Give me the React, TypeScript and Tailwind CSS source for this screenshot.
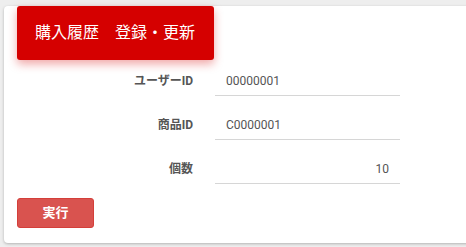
const font = "font-['Roboto','Noto_Sans_CJK_JP',sans-serif]";

const fields = [
  { label: 'ユーザーID', value: '00000001', align: 'text-left' },
  { label: '商品ID', value: 'C0000001', align: 'text-left' },
  { label: '個数', value: '10', align: 'text-right' },
];

export default function App() {
  return (
    <div className={`min-h-screen bg-[#eeeeee] pt-[32px] pl-[4px] overflow-hidden ${font}`}>
      <div className="w-[480px] rounded-[4px] bg-white pl-[13px] pb-[15px] shadow-[0_1px_3px_rgba(0,0,0,0.25)]">
        {/* Header */}
        <div className="-mt-[26px] flex h-[54px] w-[197px] items-center rounded-[3px] bg-[#d50000] pl-[18px] text-[16px] text-white shadow-[0_4px_10px_rgba(213,0,0,0.35)]">
          購入履歴　登録・更新
        </div>

        {/* Form */}
        <div className="mt-[6px] flex flex-col gap-[14px]">
          {fields.map((f) => (
            <div key={f.label} className="flex h-[30px] items-center">
              <label className="w-[176px] text-right text-[12px] font-bold text-[#555555]">
                {f.label}
              </label>
              <div
                className={`ml-[22px] flex h-[30px] w-[185px] items-center border-b border-[#d6d6d6] px-[11px] text-[12px] text-[#555555] ${f.align}`}
              >
                <span className="w-full">{f.value}</span>
              </div>
            </div>
          ))}
        </div>

        <button className="mt-[14px] h-[30px] w-[77px] rounded-[3px] border border-[#d43f3a] bg-[#d9534f] text-[13px] font-bold text-white">
          実行
        </button>
      </div>
    </div>
  );
}
